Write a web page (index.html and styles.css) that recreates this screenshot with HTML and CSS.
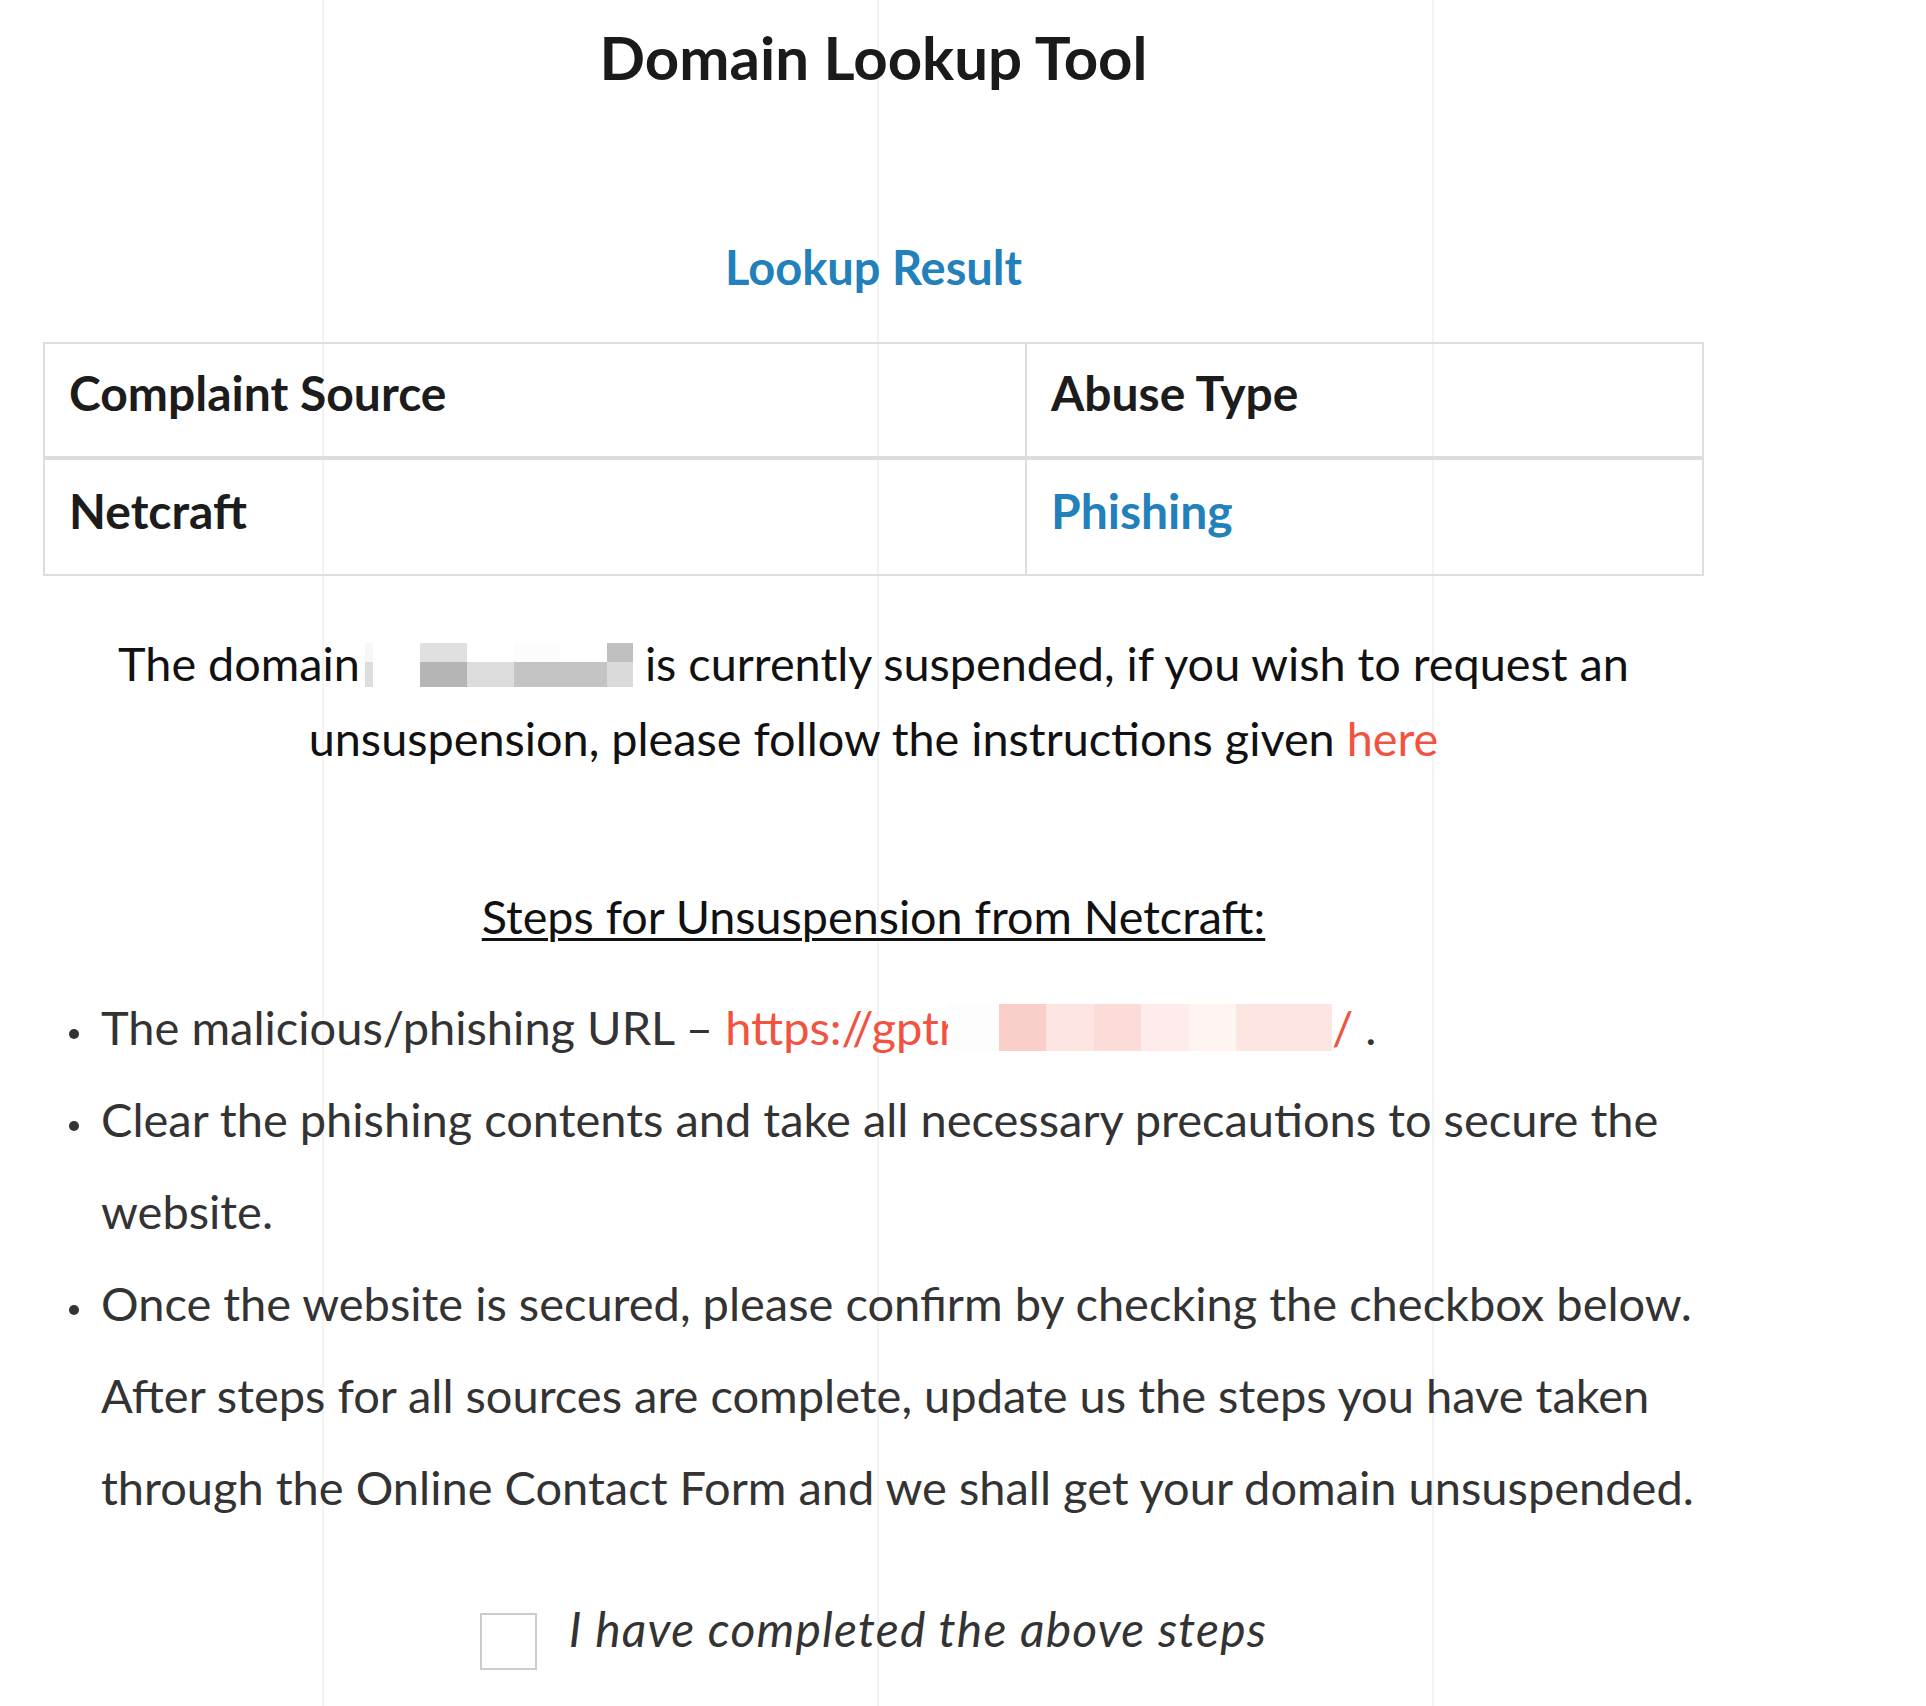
FILE: index.html
```html
<!DOCTYPE html>
<html lang="en">
<head>
<meta charset="utf-8">
<title>Domain Lookup Tool</title>
<link rel="stylesheet" href="styles.css">
</head>
<body>
<main class="page">
  <h1 class="title">Domain Lookup Tool</h1>
  <h2 class="result-title">Lookup Result</h2>
  <table class="result-table">
    <thead>
      <tr>
        <th class="col-source">Complaint Source</th>
        <th class="col-type">Abuse Type</th>
      </tr>
    </thead>
    <tbody>
      <tr>
        <td>Netcraft</td>
        <td class="abuse">Phishing</td>
      </tr>
    </tbody>
  </table>
  <p class="notice">The domain<span class="redact-domain"></span> is currently suspended, if you wish to request an<br>unsuspension, please follow the instructions given <a class="link-red" href="#">here</a></p>
  <h3 class="steps-title">Steps for Unsuspension from Netcraft:</h3>
  <ul class="steps">
    <li>The malicious/phishing URL – <span class="url">https://gptr<span class="redact-url"></span>/</span> .</li>
    <li>Clear the phishing contents and take all necessary precautions to secure the<br>website.</li>
    <li>Once the website is secured, please confirm by checking the checkbox below.<br>After steps for all sources are complete, update us the steps you have taken<br>through the Online Contact Form and we shall get your domain unsuspended.</li>
  </ul>
  <label class="confirm">
    <span class="box"></span>
    <span class="confirm-text">I have completed the above steps</span>
  </label>
</main>
</body>
</html>
```

FILE: styles.css
```css
html, body {
  margin: 0;
  padding: 0;
}
body {
  font-family: "Lato", "Liberation Sans", sans-serif;
  color: #111;
  background-color: #fff;
  background-image:
    linear-gradient(to right, transparent 322px, #f3f3f3 322px, #f3f3f3 324px, transparent 324px),
    linear-gradient(to right, transparent 877px, #f3f3f3 877px, #f3f3f3 879px, transparent 879px),
    linear-gradient(to right, transparent 1432px, #f3f3f3 1432px, #f3f3f3 1434px, transparent 1434px);
  min-height: 1706px;
}
.page {
  width: 1661px;
  margin-left: 43px;
  padding-top: 1px;
}
.title {
  margin: 20px 0 0;
  font-size: 60px;
  line-height: 72px;
  font-weight: 700;
  text-align: center;
  color: #1a1a1a;
}
.result-title {
  margin: 146px 0 0;
  font-size: 47px;
  line-height: 56px;
  font-weight: 700;
  text-align: center;
  color: #2280bb;
}
.result-table {
  margin-top: 47px;
  width: 1661px;
  border-collapse: collapse;
  font-size: 48px;
  line-height: 58px;
}
.result-table th,
.result-table td {
  border: 2px solid #dddddd;
  text-align: left;
  padding: 20px 24px 34px;
  color: #1c1c1c;
}
.result-table th {
  font-weight: 700;
  border-bottom-width: 4px;
}
.result-table td {
  font-weight: 700;
  padding-top: 22px;
}
.col-source {
  width: 932px;
}
.result-table td.abuse {
  color: #2280bb;
}
.notice {
  margin: 50px 0 0;
  font-size: 46.8px;
  line-height: 75px;
  text-align: center;
  color: #111;
}
.redact-domain {
  display: inline-block;
  width: 273px;
  height: 44px;
  vertical-align: -6px;
  background:
    linear-gradient(#dddddd, #dddddd) 5px 19px / 8px 25px no-repeat,
    linear-gradient(#f7f7f7, #f7f7f7) 5px 0 / 8px 19px no-repeat,
    linear-gradient(#e0e0e0, #e0e0e0) 60px 0 / 47px 19px no-repeat,
    linear-gradient(#fcfcfc, #fcfcfc) 154px 0 / 46px 19px no-repeat,
    linear-gradient(#c0c0c0, #c0c0c0) 247px 0 / 26px 19px no-repeat,
    linear-gradient(#b5b5b5, #b5b5b5) 60px 19px / 47px 25px no-repeat,
    linear-gradient(#dcdcdc, #dcdcdc) 107px 19px / 47px 25px no-repeat,
    linear-gradient(#c4c4c4, #c4c4c4) 154px 19px / 93px 25px no-repeat,
    linear-gradient(#dadada, #dadada) 247px 19px / 26px 25px no-repeat;
}
.link-red {
  color: #f1533f;
  text-decoration: none;
}
.steps-title {
  margin: 112px 0 0;
  font-size: 46.7px;
  line-height: 56px;
  font-weight: 400;
  text-align: center;
  text-decoration: underline;
  text-decoration-thickness: 3px;
  text-underline-offset: 4px;
  color: #111;
}
.steps {
  list-style: none;
  margin: 37px 0 0;
  padding: 0;
  font-size: 47px;
  line-height: 92px;
  color: #333;
  white-space: nowrap;
}
.steps li {
  position: relative;
  padding-left: 58px;
}
.steps li::before {
  content: "";
  position: absolute;
  left: 26px;
  top: 48px;
  width: 10px;
  height: 10px;
  border-radius: 50%;
  background: #333;
}
.url {
  color: #f1533f;
}
.redact-url {
  display: inline-block;
  width: 384px;
  height: 47px;
  margin-left: -8px;
  vertical-align: -6px;
  background:
    linear-gradient(#fdfdfd, #fdfdfd) 0 0 / 51px 47px no-repeat,
    linear-gradient(#f9cfca, #f9cfca) 51px 0 / 47px 47px no-repeat,
    linear-gradient(#fde5e3, #fde5e3) 98px 0 / 48px 47px no-repeat,
    linear-gradient(#fcdcd8, #fcdcd8) 146px 0 / 47px 47px no-repeat,
    linear-gradient(#fdeceb, #fdeceb) 193px 0 / 48px 47px no-repeat,
    linear-gradient(#fef5f3, #fef5f3) 241px 0 / 47px 47px no-repeat,
    linear-gradient(#fde5e2, #fde5e2) 288px 0 / 96px 47px no-repeat;
}
.confirm {
  display: flex;
  justify-content: center;
  align-items: flex-start;
  gap: 32px;
  margin-top: 68px;
}
.box {
  width: 53px;
  height: 53px;
  margin-top: 12px;
  border: 2px solid #cccccc;
  background: #fff;
  flex: none;
}
.confirm-text {
  font-size: 48px;
  line-height: 56px;
  letter-spacing: 1.2px;
  font-style: italic;
  color: #333;
}
```
